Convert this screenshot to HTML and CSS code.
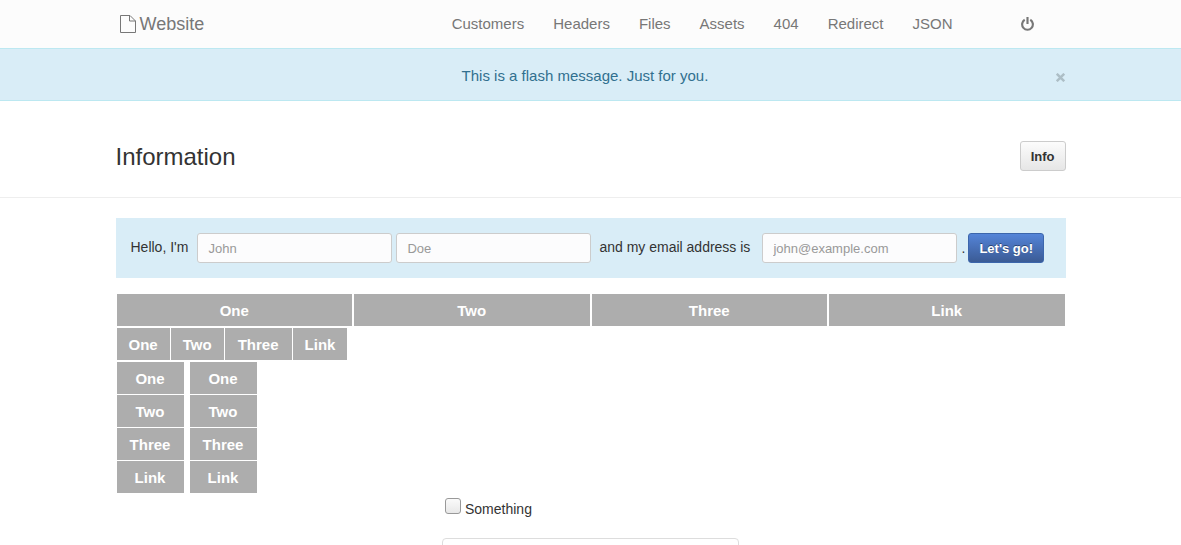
FILE: index.html
```html
<!DOCTYPE html>
<html lang="en">
<head>
<meta charset="utf-8">
<title>Website</title>
<link rel="stylesheet" href="styles.css">
</head>
<body>
<header class="navbar">
  <div class="container navbar-inner">
    <a class="brand" href="#">
      <svg class="brand-icon" viewBox="0 0 16 18" aria-hidden="true"><path d="M.5 .5H10L15.500 6V17.500H.5ZM9.500 .5V6H15.500" fill="none" stroke="currentColor"/></svg>
      <span>Website</span>
    </a>
    <nav class="nav">
      <a href="#">Customers</a>
      <a href="#">Headers</a>
      <a href="#">Files</a>
      <a href="#">Assets</a>
      <a href="#">404</a>
      <a href="#">Redirect</a>
      <a href="#">JSON</a>
    </nav>
    <a class="logout" href="#" aria-label="Log out">
      <svg class="logout-icon" viewBox="0 0 12 14" aria-hidden="true"><path d="M3.400 2.600A5 5 0 1 0 8.600 2.600M6 0V6.500" fill="none" stroke="currentColor" stroke-width="2"/></svg>
    </a>
  </div>
</header>
<div class="flash" role="status">
  <div class="container flash-inner">
    <span class="flash-text">This is a flash message. Just for you.</span>
    <button class="close" type="button" aria-label="Close"><svg class="close-icon" viewBox="0 0 8 8" aria-hidden="true"><path d="M.7 .7L7.300 7.300M7.300 .7L.7 7.300" stroke="currentColor" stroke-width="2.200"/></svg></button>
  </div>
</div>
<div class="page-header">
  <div class="container page-header-inner">
    <h1 class="title">Information</h1>
    <button class="btn" type="button">Info</button>
  </div>
</div>
<main class="container">
  <form class="intro">
    <label for="first">Hello, I'm</label>
    <input class="field first" id="first" type="text" placeholder="John">
    <input class="field last" type="text" placeholder="Doe" aria-label="Last name">
    <label for="email">and my email address is</label>
    <input class="field email" id="email" type="email" placeholder="john@example.com">
    <span class="stop">.</span>
    <button class="btn btn-primary" type="button">Let's go!</button>
  </form>
  <div class="menus">
    <div class="menu menu-wide">
      <button class="tile" type="button">One</button>
      <button class="tile" type="button">Two</button>
      <button class="tile" type="button">Three</button>
      <a class="tile" href="#">Link</a>
    </div>
    <div class="menu">
      <button class="tile" type="button">One</button>
      <button class="tile" type="button">Two</button>
      <button class="tile tile-long" type="button">Three</button>
      <a class="tile" href="#">Link</a>
    </div>
    <div class="stacks">
      <div class="menu menu-stacked">
        <button class="tile" type="button">One</button>
        <button class="tile" type="button">Two</button>
        <button class="tile tile-long" type="button">Three</button>
        <a class="tile" href="#">Link</a>
      </div>
      <div class="menu menu-stacked">
        <button class="tile" type="button">One</button>
        <button class="tile" type="button">Two</button>
        <button class="tile tile-long" type="button">Three</button>
        <a class="tile" href="#">Link</a>
      </div>
    </div>
  </div>
  <form class="options">
    <div class="option">
      <input class="check" id="something" type="checkbox">
      <label for="something">Something</label>
    </div>
    <textarea class="notes" aria-label="Notes"></textarea>
  </form>
</main>
</body>
</html>
```
FILE: styles.css
```css
* { box-sizing: border-box; }

body {
  margin: 0;
  background: #fff;
  color: #333;
  font: 14px/20px "Liberation Sans", Arial, sans-serif;
}

a { color: inherit; text-decoration: none; }

button, input, textarea { font: inherit; margin: 0; }

.container {
  max-width: 950px;
  margin: 0 auto;
}

.navbar { background: #fcfcfc; color: #777; }

.navbar-inner {
  display: flex;
  align-items: center;
  height: 48px;
  padding: 0 32px 0 4px;
}

.brand {
  display: flex;
  align-items: center;
  gap: 4px;
  font-size: 18px;
}

.brand-icon { width: 16px; height: 18px; }

.nav { display: flex; gap: 29px; margin-left: auto; font-size: 15px; }

.logout { display: flex; margin-left: 68px; }
.logout-icon { width: 13px; height: 15px; }

.flash {
  background: #d9edf7;
  border: solid #bce8f1;
  border-width: 1px 0;
  color: #31708f;
}

.flash-inner {
  display: flex;
  align-items: center;
  padding: 17px 0 14px;
}

.flash-text { flex: 1; font-size: 15px; text-align: center; }

.close {
  display: flex;
  padding: 5px 1px 3px;
  border: 0;
  background: none;
  color: #adbec6;
}

.close-icon { width: 9px; height: 9px; }

.page-header { border-bottom: 1px solid #eee; }

.page-header-inner {
  display: flex;
  align-items: center;
  justify-content: space-between;
  padding: 40px 0 26px;
}

.title {
  margin: 0;
  padding-top: 2px;
  font-size: 24px;
  line-height: 28px;
  font-weight: normal;
}

.btn {
  height: 30px;
  padding: 2px 10px 0;
  border: 1px solid #ccc;
  border-radius: 3px;
  background: linear-gradient(#fcfcfc, #e6e6e6);
  color: #333;
  font-size: 13px;
  font-weight: bold;
  white-space: nowrap;
}

.btn-primary {
  border-color: #3c66ac;
  background: linear-gradient(#5484d8, #3b5b95);
  color: #fff;
  text-shadow: 0 -1px 0 rgba(0, 0, 0, .4);
}

.intro {
  display: flex;
  flex-wrap: wrap;
  align-items: center;
  margin-top: 20px;
  padding: 15px;
  background: #d9edf7;
}

.intro label { padding-bottom: 2px; }

.field {
  width: 195px;
  height: 30px;
  padding: 0 10px;
  border: 1px solid #ccc;
  border-radius: 3px;
  background: #fcfcfd;
  color: #333;
  font-size: 13px;
}

.field::placeholder { color: #999; opacity: 1; }

.first { margin: 0 4px 0 9px; }
.last { margin-right: 8px; }
.email { margin: 0 4px 0 12px; }
.stop { width: 7px; }

.menus {
  display: grid;
  gap: 2px;
  margin-top: 16px;
  padding: 0 1px;
}

.menu { display: flex; gap: 1px; }
.menu-wide { gap: 2px; }
.menu-wide .tile { flex: 1; }
.menu-stacked { flex-direction: column; }
.stacks { display: flex; gap: 6px; }

.tile {
  padding: 7px 12px 5px;
  border: 0;
  background: #adadad;
  color: #fff;
  font-size: 15px;
  line-height: 20px;
  font-weight: bold;
  text-align: center;
}

.tile-long { min-width: 67px; }

.options {
  width: 297px;
  margin: 5px auto 0;
}

.option { display: flex; gap: 4px; padding-left: 3px; }
.option label { padding-top: 1px; }

.check {
  appearance: none;
  width: 16px;
  height: 16px;
  border: 1px solid #999;
  border-radius: 3px;
  background: linear-gradient(#fafafa, #e8e8e8);
}

.notes {
  display: block;
  width: 100%;
  height: 64px;
  margin-top: 19px;
  border: 1px solid #ddd;
  border-radius: 4px;
  background: #fff;
}
```
